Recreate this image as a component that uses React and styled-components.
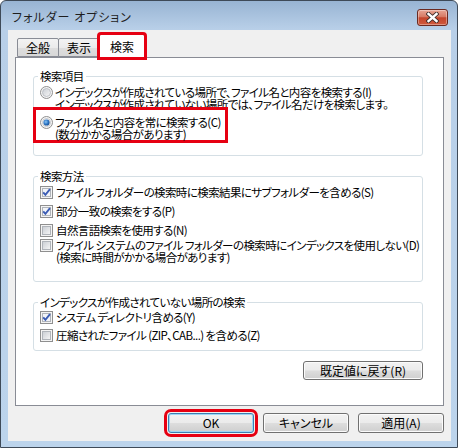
import React from 'react';
import styled, {createGlobalStyle} from 'styled-components';

const GlobalStyle = createGlobalStyle`
  html, body {
    margin: 0;
    padding: 0;
    background: #ffffff;
  }

  body {
    font-family: "Noto Sans CJK JP", "Noto Sans", sans-serif;
    font-size: 12px;
    color: #000000;
    font-feature-settings: "palt";
  }
`;

const Window = styled.div`
  box-sizing: border-box;
  width: 458px;
  height: 448px;
  border: 1px solid #3e4a58;
  border-radius: 6px 6px 0 0;
  background: linear-gradient(180deg, #98b4d3 0, #b8cfe8 28px, #bcd4ec 100%);
  padding: 0 6px 6px 7px;
  display: flex;
  flex-direction: column;
`;

const TitleBar = styled.div`
  box-sizing: border-box;
  height: 29px;
  display: flex;
  align-items: center;
  justify-content: space-between;
  padding: 3px 3px 0 4px;
`;

const Title = styled.span`
  font-size: 12px;
  line-height: 14px;
  letter-spacing: 1px;
  color: #1e1e1e;
`;

const CloseButton = styled.div`
  box-sizing: border-box;
  width: 31px;
  height: 17px;
  border: 1px solid #6b2a21;
  border-radius: 3px;
  background: linear-gradient(180deg, #e8a695 0, #d77a64 45%, #c4452c 52%, #d05a3e 100%);
  box-shadow: inset 0 0 0 1px rgba(255, 255, 255, 0.35);
  display: flex;
  align-items: center;
  justify-content: center;
`;

const Client = styled.div`
  flex: 1;
  background: #f0f0f0;
  padding: 4px 7px 0 7px;
  display: flex;
  flex-direction: column;
`;

const TabStrip = styled.div`
  display: flex;
  align-items: flex-end;
  height: 23px;
  padding-left: 2px;
`;

const Tab = styled.div`
  box-sizing: border-box;
  width: ${(p) => p.$width}px;
  height: ${(p) => (p.$active ? 24 : 19)}px;
  margin-left: ${(p) => (p.$first ? 0 : -1)}px;
  margin-bottom: ${(p) => (p.$active ? -1 : 0)}px;
  border: 1px solid #898c95;
  border-bottom: ${(p) => (p.$active ? 'none' : '1px solid #898c95')};
  border-radius: 2px 2px 0 0;
  background: ${(p) => (p.$active ? '#ffffff' : 'linear-gradient(180deg, #f3f3f3 0, #ebebeb 50%, #dedede 51%, #d8d8d8 100%)')};
  display: flex;
  align-items: center;
  justify-content: center;
  padding-top: ${(p) => (p.$active ? 0 : 1)}px;
  line-height: 14px;
  position: relative;
  z-index: ${(p) => (p.$active ? 1 : 0)};
  outline: ${(p) => (p.$marked ? '3px solid #e60012' : 'none')};
  outline-offset: -1px;
`;

const Panel = styled.div`
  box-sizing: border-box;
  height: 349px;
  background: #ffffff;
  border: 1px solid #898c95;
  padding: 11px 20px 0 17px;
  display: flex;
  flex-direction: column;
  font-size: 11.5px;
  letter-spacing: -0.6px;
`;

const Group = styled.fieldset`
  margin: 0 0 13px 0;
  min-width: 0;
  border: 1px solid #d5dfe5;
  border-radius: 3px;
  padding: 0 6px ${(p) => p.$bottom}px 6px;
`;

const Legend = styled.legend`
  padding: 0 2px;
  margin-left: -2px;
  line-height: 14px;
`;

const OptionList = styled.div`
  display: flex;
  flex-direction: column;
  align-items: flex-start;
  margin-top: ${(p) => p.$top}px;
  gap: ${(p) => p.$gap}px;
`;

const Row = styled.div`
  display: flex;
  align-items: flex-start;
  line-height: 12px;
  margin-top: ${(p) => p.$pull || 0}px;
  white-space: nowrap;
`;

const Label = styled.span`
  margin-left: ${(p) => p.$indent}px;
`;

const Marked = styled.div`
  display: flex;
  border: 3px solid #e60012;
  padding: 6px 4px 0 4px;
  margin: -9px 0 0 -7px;
`;

const ResetRow = styled.div`
  display: flex;
  justify-content: flex-end;
  margin-top: -3px;
`;

const Button = styled.div`
  box-sizing: border-box;
  width: ${(p) => p.$width}px;
  height: ${(p) => p.$height}px;
  border: 1px solid ${(p) => (p.$default ? '#3c7fb1' : '#707070')};
  border-radius: 3px;
  background: linear-gradient(180deg, #f2f2f2 0, #ebebeb 48%, #dddddd 52%, #cfcfcf 100%);
  box-shadow: inset 0 0 0 1px ${(p) => (p.$default ? '#9ed6f5' : '#fbfbfb')};
  display: flex;
  align-items: center;
  justify-content: center;
  font-size: 12px;
  line-height: 14px;
  letter-spacing: 0;
  outline: ${(p) => (p.$marked ? '3px solid #e60012' : 'none')};
  outline-offset: 1px;
`;

const ButtonRow = styled.div`
  display: flex;
  justify-content: flex-end;
  gap: 9px;
  margin-top: 7px;
`;

const CloseGlyph = () => (
  <svg width="13" height="11" viewBox="0 0 13 11">
    <path d="M2.5 2 L10.5 9 M10.5 2 L2.5 9" stroke="#3a2a28" strokeWidth="4.2" strokeLinecap="square" />
    <path d="M2.5 2 L10.5 9 M10.5 2 L2.5 9" stroke="#ffffff" strokeWidth="2.4" strokeLinecap="square" />
  </svg>
);

const CheckBox = ({checked}) => (
  <svg width="13" height="13" viewBox="0 0 13 13" style={{flex: 'none'}}>
    <defs>
      <linearGradient id="cbFill" x1="0" y1="0" x2="1" y2="1">
        <stop offset="0" stopColor="#c9cdd3" />
        <stop offset="1" stopColor="#f7f7f7" />
      </linearGradient>
    </defs>
    <rect x="0.5" y="0.5" width="12" height="12" fill="#f4f4f4" stroke="#8f8f8f" />
    <rect x="2.5" y="2.5" width="8" height="8" fill={checked ? '#f2f4f8' : 'url(#cbFill)'} stroke="#b0b4ba" />
    {checked && <path d="M3.2 6.3 L5.4 8.8 L10 3.2" stroke="#3b5cb4" strokeWidth="1.9" fill="none" />}
  </svg>
);

const Radio = ({checked}) => (
  <svg width="13" height="13" viewBox="0 0 13 13" style={{flex: 'none'}}>
    <defs>
      <linearGradient id="rdFill" x1="0" y1="0" x2="1" y2="1">
        <stop offset="0" stopColor="#c9cdd3" />
        <stop offset="1" stopColor="#f7f7f7" />
      </linearGradient>
      <radialGradient id="rdDot" cx="0.4" cy="0.4" r="0.6">
        <stop offset="0" stopColor="#8cc6f4" />
        <stop offset="0.6" stopColor="#2f79c8" />
        <stop offset="1" stopColor="#174f94" />
      </radialGradient>
    </defs>
    <circle cx="6.5" cy="6.5" r="6" fill="#f4f4f4" stroke="#8f8f8f" />
    <circle cx="6.5" cy="6.5" r="4" fill={checked ? '#ffffff' : 'url(#rdFill)'} stroke="#b4b8be" strokeWidth="0.8" />
    {checked && <circle cx="6.5" cy="6.5" r="3.1" fill="url(#rdDot)" />}
  </svg>
);

const Lines = ({lines}) => (
  <span>
    {lines.map((line) => (
      <div key={line}>{line}</div>
    ))}
  </span>
);

const RadioOption = ({checked, lines}) => (
  <Row>
    <Radio checked={checked} />
    <Label $indent={2}>
      <Lines lines={lines} />
    </Label>
  </Row>
);

const CheckOption = ({checked, lines, pull}) => (
  <Row $pull={pull}>
    <CheckBox checked={checked} />
    <Label $indent={3}>
      <Lines lines={lines} />
    </Label>
  </Row>
);

const App = () => (
  <>
    <GlobalStyle />
    <Window>
      <TitleBar>
        <Title>フォルダー オプション</Title>
        <CloseButton>
          <CloseGlyph />
        </CloseButton>
      </TitleBar>
      <Client>
        <TabStrip>
          <Tab $first $width={42}>全般</Tab>
          <Tab $width={42}>表示</Tab>
          <Tab $active $marked $width={46}>検索</Tab>
        </TabStrip>
        <Panel>
          <Group $bottom={12}>
            <Legend>検索項目</Legend>
            <OptionList $top={3} $gap={6}>
              <RadioOption
                lines={[
                  'インデックスが作成されている場所で、ファイル名と内容を検索する(I)',
                  'インデックスが作成されていない場所では、ファイル名だけを検索します。'
                ]}
              />
              <Marked>
                <RadioOption checked lines={['ファイル名と内容を常に検索する(C)', '(数分かかる場合があります)']} />
              </Marked>
            </OptionList>
          </Group>
          <Group $bottom={18}>
            <Legend>検索方法</Legend>
            <OptionList $top={3} $gap={6}>
              <CheckOption checked lines={['ファイル フォルダーの検索時に検索結果にサブフォルダーを含める(S)']} />
              <CheckOption checked lines={['部分一致の検索をする(P)']} />
              <CheckOption lines={['自然言語検索を使用する(N)']} />
              <CheckOption
                pull={-4}
                lines={[
                  'ファイル システムのファイル フォルダーの検索時にインデックスを使用しない(D)',
                  '(検索に時間がかかる場合があります)'
                ]}
              />
            </OptionList>
          </Group>
          <Group $bottom={8}>
            <Legend>インデックスが作成されていない場所の検索</Legend>
            <OptionList $top={2} $gap={5}>
              <CheckOption checked lines={['システム ディレクトリ含める(Y)']} />
              <CheckOption lines={['圧縮されたファイル (ZIP、CAB...) を含める(Z)']} />
            </OptionList>
          </Group>
          <ResetRow>
            <Button $width={120} $height={19}>既定値に戻す(R)</Button>
          </ResetRow>
        </Panel>
        <ButtonRow>
          <Button $default $marked $width={86} $height={20}>OK</Button>
          <Button $width={86} $height={20}>キャンセル</Button>
          <Button $width={86} $height={20}>適用(A)</Button>
        </ButtonRow>
      </Client>
    </Window>
  </>
);

export default App;
